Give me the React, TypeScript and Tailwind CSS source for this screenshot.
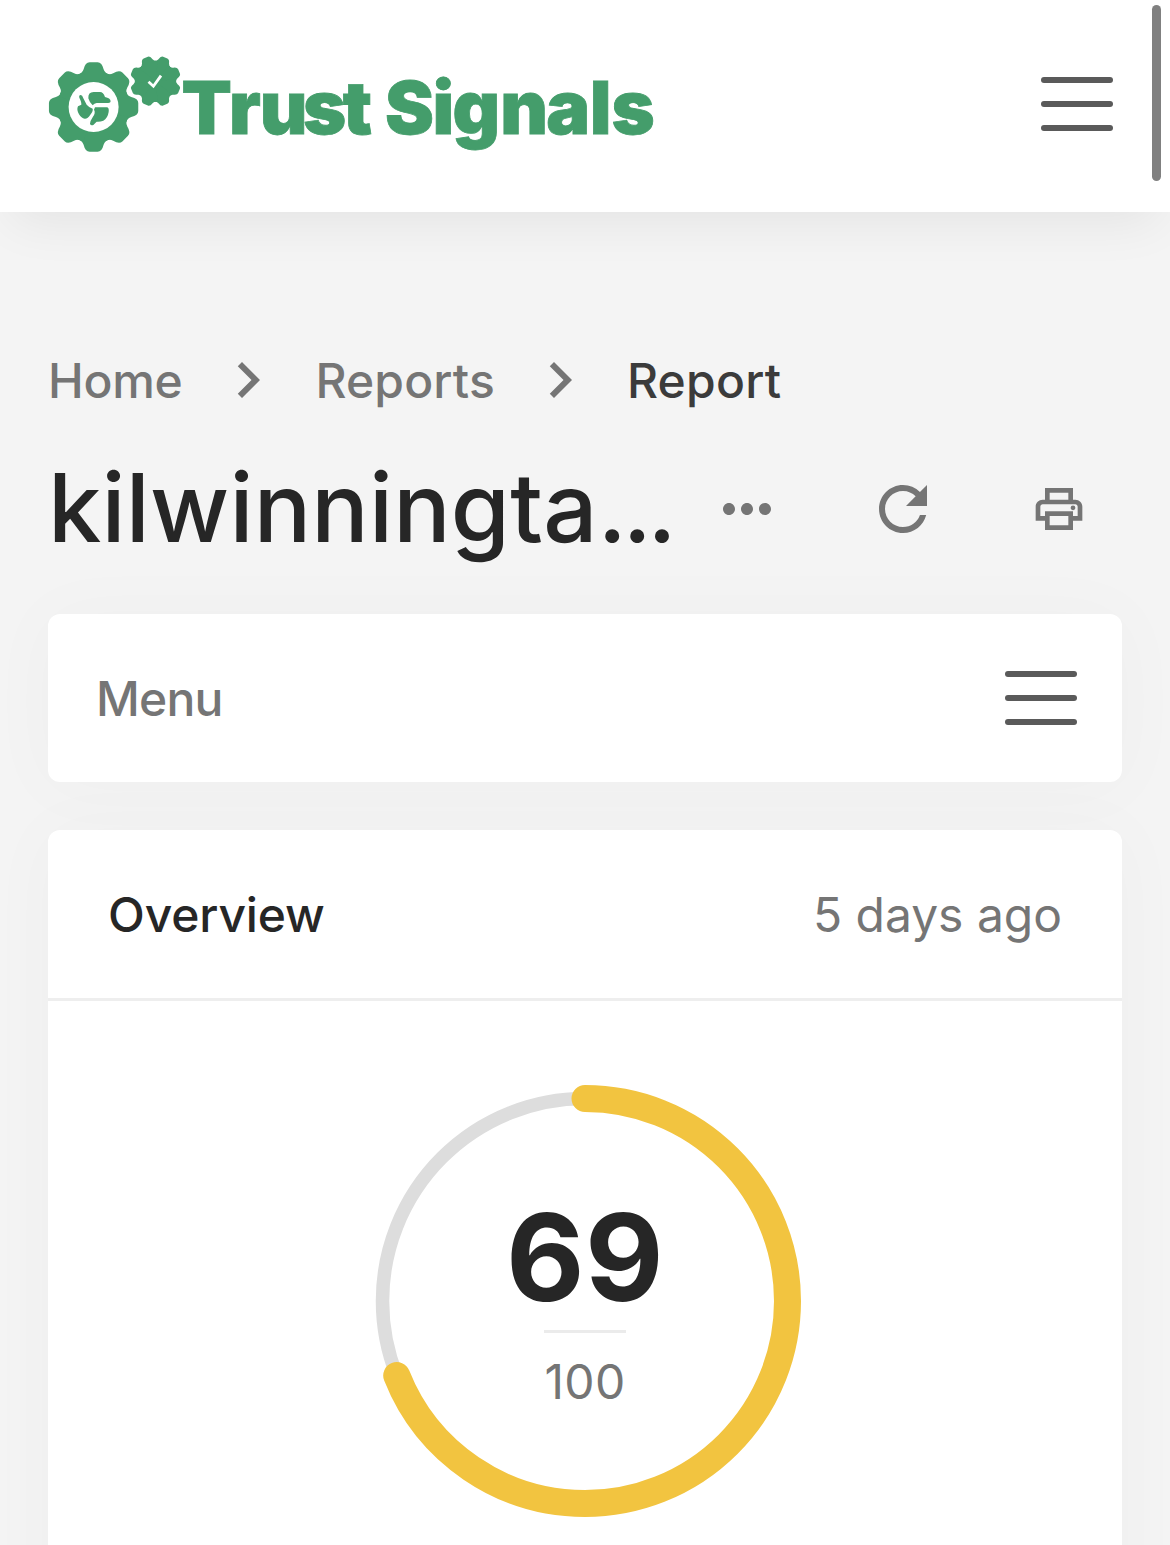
import React from "react";
import {
  MdChevronRight,
  MdMoreHoriz,
  MdOutlinePrint,
  MdRefresh,
} from "react-icons/md";

const TOOTH =
  "M-52-95Q-34-99-30-113Q-25-134-12-134H12Q25-134 30-113Q34-99 52-95L0 0Z";
const TOOTH_ANGLES = [0, 45, 90, 135, 180, 225, 270, 315];

const Gear: React.FC<{ transform: string }> = ({ transform }) => (
  <g transform={transform}>
    <circle r="108" />
    {TOOTH_ANGLES.map((angle) => (
      <path key={angle} d={TOOTH} transform={`rotate(${angle})`} />
    ))}
  </g>
);

const Logo: React.FC = () => (
  <svg
    width="612"
    height="120"
    viewBox="0 0 612 120"
    fill="#449d6b"
    className="mt-0.5"
    role="img"
    aria-label="Trust Signals"
  >
    <Gear transform="translate(45.6 62) scale(0.3333)" />
    <Gear transform="translate(107.5 36.2) rotate(22.5) scale(0.19)" />
    <circle cx="45.6" cy="62" r="25" fill="#fff" />
    {/* globe */}
    <g transform="translate(-8 0) scale(0.3333)">
      <path d="M145 160Q144 141 161 141H180Q190 141 195 156Q211 159 212 169Q212 174 205 174H170Q163 175 158 181Q147 169 145 160Z" />
      <path d="M118 158Q116 150 122 150Q127 150 130 160L140 179Q148 188 158 191Q160 198 151 209Q143 222 134 221Q124 220 117 208Q109 194 114 184L124 179Q125 172 118 158Z" />
      <path d="M165 187H200Q208 187 206 201Q203 220 190 227Q180 231 170 230L160 240Q152 243 150 236Q150 229 158 217Q168 203 162 194Z" />
    </g>
    <path
      d="M100.5 36.8L105.4 41.2L113 30.6"
      fill="none"
      stroke="#fff"
      strokeWidth="2.8"
    />
    <text
      x="158.8 197 235.5 276.5 309.5 361.5 395.3 428.3 476 520.3 552.5 585"
      y="89"
      textAnchor="middle"
      stroke="#449d6b"
      strokeWidth="0.8"
      className="text-[73.5px] font-black tracking-normal"
    >
      TrustSignals
    </text>
  </svg>
);

const MenuButton: React.FC<{ label: string }> = ({ label }) => (
  <button className="flex w-[72px] flex-col gap-[18px]" aria-label={label}>
    <span className="h-1.5 w-full rounded-full bg-[#5a5a5a]" />
    <span className="h-1.5 w-full rounded-full bg-[#5a5a5a]" />
    <span className="h-1.5 w-full rounded-full bg-[#5a5a5a]" />
  </button>
);

const ScoreGauge: React.FC<{ score: number; total: number }> = ({
  score,
  total,
}) => (
  <div className="grid h-[432px] w-[432px] place-items-center">
    <svg
      viewBox="0 0 432 432"
      className="col-start-1 row-start-1 h-full w-full -rotate-90"
      fill="none"
    >
      <circle cx="216" cy="216" r="202.5" stroke="#dddddd" strokeWidth="13.5" />
      <circle
        cx="216"
        cy="216"
        r="202.5"
        stroke="#f2c440"
        strokeWidth="27"
        strokeLinecap="round"
        pathLength={total}
        strokeDasharray={`${score} ${total}`}
      />
    </svg>
    <div className="col-start-1 row-start-1 flex flex-col items-center pt-3">
      <span className="text-[121px] leading-[120px] font-bold text-[#262626]">
        {score}
      </span>
      <span className="mt-[13px] border-t-[3px] border-[#ebebeb] pt-[13px] text-5xl leading-[72px] text-[#757575]">
        {total}
      </span>
    </div>
  </div>
);

export default function App() {
  return (
    <div className="relative h-[1545px] w-[1170px] overflow-hidden bg-[#f4f4f4] font-['Inter',sans-serif] tracking-[0.32px] text-[#757575]">
      <header className="relative flex h-[212px] items-center justify-between bg-white pr-[57px] pb-1 pl-12 shadow-[0_21px_48px_-12px_rgba(0,0,0,0.07)]">
        <Logo />
        <MenuButton label="Open navigation" />
      </header>

      <main className="px-12 pt-[132px]">
        <nav className="flex h-[72px] items-center text-5xl font-medium">
          <a className="pt-0.5 tracking-[-0.3px]">Home</a>
          <MdChevronRight size={72} className="mr-[31px] ml-[30px]" />
          <a className="pt-0.5 tracking-[0.15px]">Reports</a>
          <MdChevronRight size={72} className="mr-[31px] ml-[29px]" />
          <span className="pt-0.5 tracking-[0.25px] text-[#3b3b3b]">
            Report
          </span>
        </nav>

        <div className="mt-[33px] flex h-[120px] items-center">
          <h1 className="w-[663px] pb-[5px] text-[95.5px] leading-[120px] font-medium tracking-[0.18px] whitespace-nowrap text-[#262626]">
            kilwinningta<span className="tracking-[-4px]">...</span>
          </h1>
          <div className="flex items-center gap-[84px]">
            <button aria-label="More">
              <MdMoreHoriz size={72} />
            </button>
            <button aria-label="Refresh">
              <MdRefresh size={72} />
            </button>
            <button className="px-2" aria-label="Print">
              <MdOutlinePrint size={56} />
            </button>
          </div>
        </div>

        <section className="mt-[45px] flex h-[168px] items-center justify-between rounded-xl bg-white pr-[45px] pl-12 shadow-[0_3px_72px_6px_rgba(0,0,0,0.022)]">
          <span className="pt-0.5 text-5xl font-medium tracking-[-0.8px]">
            Menu
          </span>
          <MenuButton label="Open report menu" />
        </section>

        <section className="mt-12 h-[900px] rounded-xl bg-white shadow-[0_3px_72px_6px_rgba(0,0,0,0.022)]">
          <div className="flex h-[171px] items-center justify-between border-b-[3px] border-[#eeeeee] px-[60px] pt-0.5 text-5xl">
            <h2 className="font-medium tracking-[-0.15px] text-[#262626]">
              Overview
            </h2>
            <span className="tracking-[-0.02px]">5 days ago</span>
          </div>
          <div className="flex justify-center pt-21">
            <ScoreGauge score={69} total={100} />
          </div>
        </section>
      </main>

      {/* scrollbar thumb */}
      <div className="absolute top-[5px] right-[9px] h-44 w-[9px] rounded-full bg-[#808080]" />
    </div>
  );
}
